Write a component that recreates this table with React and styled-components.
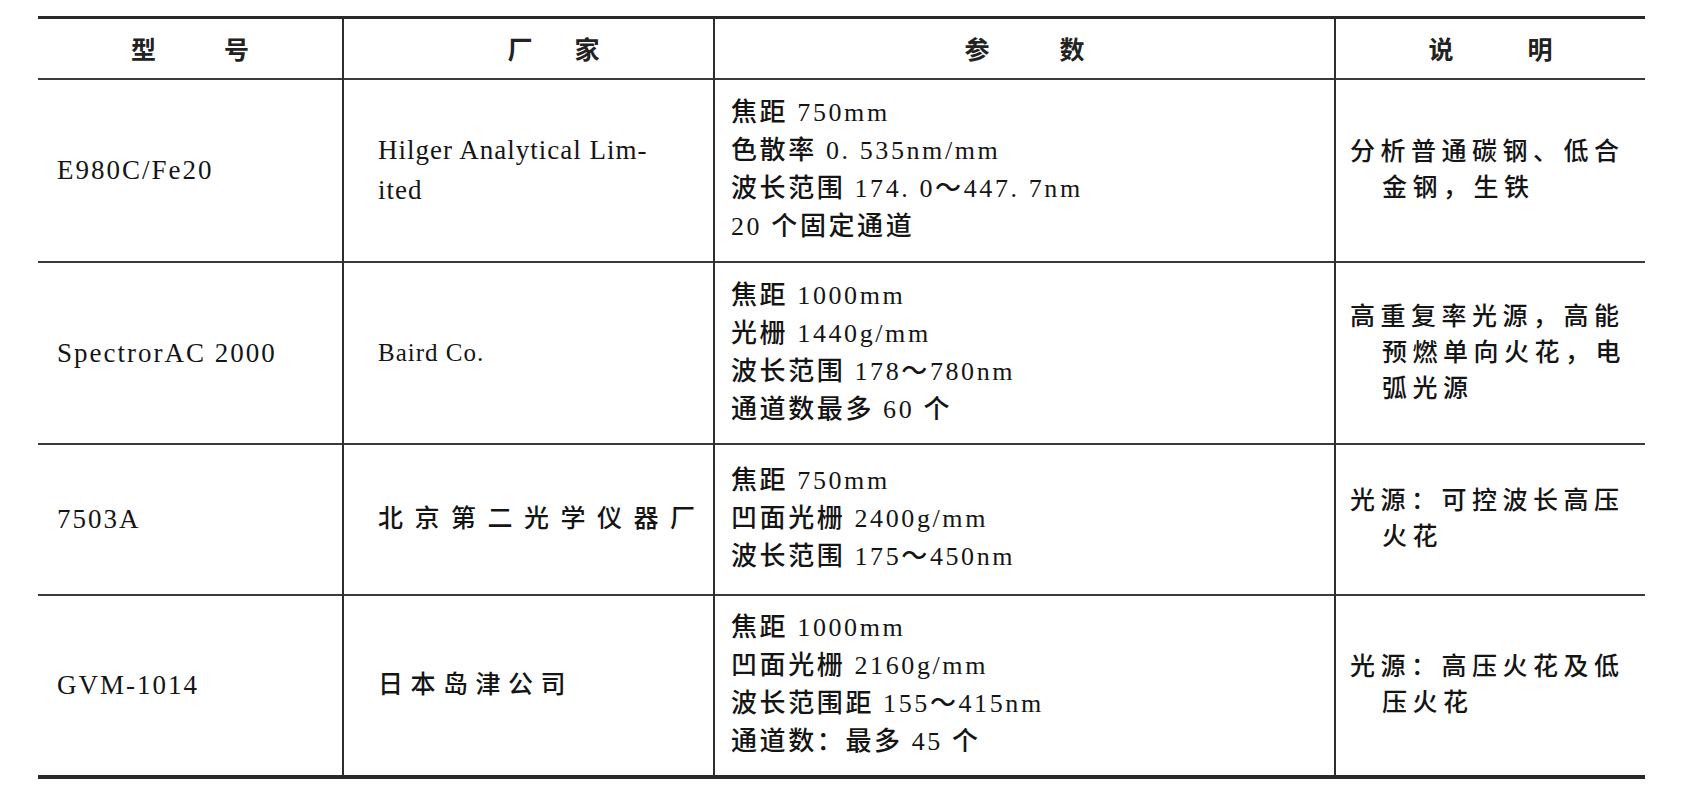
import React from 'react';
import styled, { createGlobalStyle } from 'styled-components';

const GlobalStyle = createGlobalStyle`
  html, body {
    margin: 0;
    padding: 0;
    background: #ffffff;
  }
  body {
    font-family: "Liberation Serif", "Noto Sans CJK SC", serif;
    color: #151515;
  }
`;

const Page = styled.div`
  width: 1706px;
  height: 810px;
  padding: 16px 0 0 38px;
  box-sizing: border-box;
  background: #fff;
`;

const Table = styled.table`
  border-collapse: collapse;
  table-layout: fixed;
  width: 1607px;
  border-top: 3px solid #2a2a2a;
  border-bottom: 4px solid #2a2a2a;
`;

const Row = styled.tr`
  height: ${(p) => p.$h}px;
  border-bottom: 2px solid #3a3a3a;
`;

const HeadCell = styled.th`
  padding: 0 0 0 ${(p) => p.$shift || 0}px;
  border-left: ${(p) => (p.$first ? 'none' : '2px solid #2e2e2e')};
  font-family: "Noto Sans CJK SC", sans-serif;
  font-weight: 700;
  font-size: 25px;
  color: #222;
  vertical-align: middle;
`;

const HeadText = styled.div`
  display: flex;
  justify-content: center;
  gap: ${(p) => p.$gap}px;
`;

const Cell = styled.td`
  padding: 0 0 0 ${(p) => p.$pad}px;
  border-left: ${(p) => (p.$first ? 'none' : '2px solid #2e2e2e')};
  vertical-align: middle;
  font-size: ${(p) => p.$fs || 25}px;
  font-weight: 500;
  letter-spacing: ${(p) => p.$ls || 1}px;
  line-height: ${(p) => p.$lh || 38}px;
  white-space: nowrap;
`;

const Line = styled.div`
  padding-left: ${(p) => (p.$indent ? 32 : 0)}px;
`;

const cols = [305, 371, 621, 310];

const headers = [
  { a: '型', b: '号', gap: 68 },
  { a: '厂', b: '家', gap: 42, shift: 50 },
  { a: '参', b: '数', gap: 70 },
  { a: '说', b: '明', gap: 74 },
];

const rows = [
  {
    h: 183,
    model: 'E980C/Fe20',
    maker: ['Hilger Analytical Lim-', 'ited'],
    makerFs: 27,
    makerLs: 1,
    params: ['焦距 750mm', '色散率 0. 535nm/mm', '波长范围 174. 0～447. 7nm', '20 个固定通道'],
    note: ['分析普通碳钢、低合', '金钢，生铁'],
  },
  {
    h: 182,
    model: 'SpectrorAC 2000',
    maker: ['Baird Co.'],
    makerFs: 25,
    makerLs: 0,
    params: ['焦距 1000mm', '光栅 1440g/mm', '波长范围 178～780nm', '通道数最多 60 个'],
    note: ['高重复率光源，高能', '预燃单向火花，电', '弧光源'],
  },
  {
    h: 151,
    model: '7503A',
    maker: ['北京第二光学仪器厂'],
    makerFs: 25,
    makerLs: 11.5,
    params: ['焦距 750mm', '凹面光栅 2400g/mm', '波长范围 175～450nm'],
    note: ['光源：可控波长高压', '火花'],
  },
  {
    h: 182,
    model: 'GVM-1014',
    maker: ['日本岛津公司'],
    makerFs: 25,
    makerLs: 7.5,
    params: ['焦距 1000mm', '凹面光栅 2160g/mm', '波长范围距 155～415nm', '通道数：最多 45 个'],
    note: ['光源：高压火花及低', '压火花'],
  },
];

export default function App() {
  return (
    <Page>
      <GlobalStyle />
      <Table>
        <colgroup>
          {cols.map((w, i) => (
            <col key={i} style={{ width: w }} />
          ))}
        </colgroup>
        <thead>
          <Row $h={61}>
            {headers.map((h, i) => (
              <HeadCell key={i} $first={i === 0} $shift={h.shift}>
                <HeadText $gap={h.gap}>
                  <span>{h.a}</span>
                  <span>{h.b}</span>
                </HeadText>
              </HeadCell>
            ))}
          </Row>
        </thead>
        <tbody>
          {rows.map((r, i) => (
            <Row key={i} $h={r.h}>
              <Cell $first $pad={19} $fs={27} $ls={2}>{r.model}</Cell>
              <Cell $pad={34} $fs={r.makerFs} $ls={r.makerLs} $lh={40}>
                {r.maker.map((m, j) => (
                  <Line key={j}>{m}</Line>
                ))}
              </Cell>
              <Cell $pad={16} $fs={26} $ls={2.6}>
                {r.params.map((p, j) => (
                  <Line key={j}>{p}</Line>
                ))}
              </Cell>
              <Cell $pad={14} $ls={5.5} $lh={36}>
                {r.note.map((n, j) => (
                  <Line key={j} $indent={j > 0}>{n}</Line>
                ))}
              </Cell>
            </Row>
          ))}
        </tbody>
      </Table>
    </Page>
  );
}
